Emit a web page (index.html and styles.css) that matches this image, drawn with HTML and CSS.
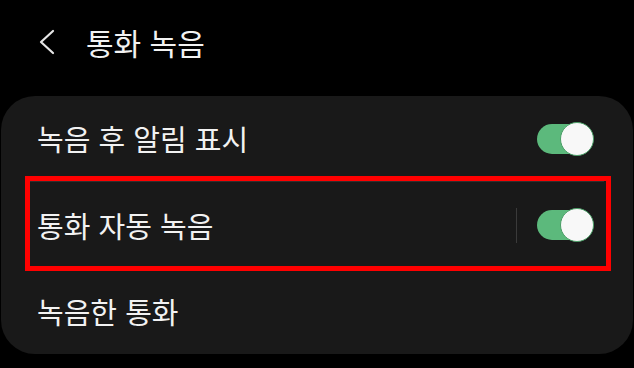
FILE: index.html
```html
<!DOCTYPE html>
<html lang="ko">
<head>
<meta charset="utf-8">
<link rel="stylesheet" href="styles.css">
</head>
<body>
<div class="screen">
  <header class="appbar">
    <svg class="back" width="18" height="26" viewBox="0 0 18 26"><polyline points="15,2 3,13 15,24" fill="none" stroke="#e6e6e6" stroke-width="2.2" stroke-linecap="round" stroke-linejoin="round"/></svg>
    <h1 class="title">통화 녹음</h1>
  </header>
  <section class="card">
    <div class="row row-first">
      <span class="label">녹음 후 알림 표시</span>
      <div class="toggle"><div class="track"></div><div class="thumb"></div></div>
    </div>
    <div class="divider"></div>
    <div class="row">
      <span class="label">통화 자동 녹음</span>
      <div class="vline"></div>
      <div class="toggle"><div class="track"></div><div class="thumb"></div></div>
    </div>
    <div class="row">
      <span class="label">녹음한 통화</span>
    </div>
    <div class="highlight"></div>
  </section>
</div>
</body>
</html>
```
FILE: styles.css
```css
html, body {
  margin: 0;
  padding: 0;
  background: #000;
}
body {
  width: 634px;
  height: 368px;
  overflow: hidden;
  font-family: "Noto Sans CJK KR", "Noto Sans", sans-serif;
  color: #f2f2f2;
}
.screen {
  display: flex;
  flex-direction: column;
}
.appbar {
  height: 84px;
  margin-bottom: 12px;
  display: flex;
  align-items: center;
  padding-left: 38px;
}
.back {
  display: block;
}
.title {
  margin: 0 0 0 30px;
  font-size: 30px;
  font-weight: 400;
  line-height: 1;
  color: #f2f2f2;
}
.card {
  position: relative;
  margin: 0 1px;
  background: #191919;
  border-radius: 34px;
  display: flex;
  flex-direction: column;
}
.row {
  height: 86px;
  display: flex;
  align-items: center;
  padding: 0 39px 0 36px;
}
.row-first {
  height: 85px;
}
.label {
  flex: 1;
  font-size: 29px;
  line-height: 1;
  color: #f2f2f2;
}
.divider {
  height: 1px;
  margin: 0 29px 0 29px;
  background: #2f2f2f;
}
.vline {
  width: 1px;
  height: 35px;
  background: #3a3a3a;
  margin-right: 20px;
}
.toggle {
  position: relative;
  width: 57px;
  height: 34px;
}
.track {
  margin-top: 2px;
  width: 53px;
  height: 30px;
  border-radius: 15px;
  background: #5cb97c;
}
.thumb {
  position: absolute;
  right: 0;
  top: 0;
  width: 32px;
  height: 32px;
  border-radius: 50%;
  background: #f8f8f8;
  border: 1px solid #4a9e66;
}
.highlight {
  position: absolute;
  left: 24px;
  top: 80px;
  width: 576px;
  height: 85px;
  border: 5px solid #ff0000;
}
```
